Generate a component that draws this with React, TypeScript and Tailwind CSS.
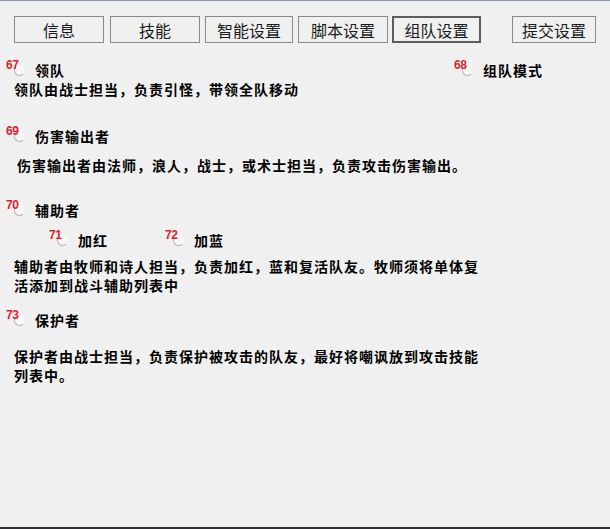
import React from "react"

const cjk = { fontFamily: '"Noto Sans CJK SC", "Noto Sans", sans-serif' }

const tabs = [
  { label: "信息", w: "w-[90px]", gap: "" },
  { label: "技能", w: "w-[90px]", gap: "ml-[6px]" },
  { label: "智能设置", w: "w-[88px]", gap: "ml-[5px]" },
  { label: "脚本设置", w: "w-[90px]", gap: "ml-[5px]" },
  { label: "组队设置", w: "w-[89px]", gap: "ml-[4px]", active: true },
  { label: "提交设置", w: "w-[84px]", gap: "ml-[31px]" },
]

/** Radio with the red control number painted over it */
function Radio({ num, label }: { num: string; label: string }) {
  return (
    <div className="flex items-center h-4">
      <span className="relative w-[11px] h-[11px] shrink-0">
        <span className="absolute inset-0 rounded-full border border-[#b8b8b8] border-t-transparent border-r-transparent bg-white/40" />
        <span
          className="absolute -top-[6px] -left-[8px] text-[12px] leading-none font-bold text-[#dc1e32] tracking-[-0.5px]"
          style={{ fontFamily: '"Liberation Sans", Arial, sans-serif' }}
        >
          {num}
        </span>
      </span>
      <span className="ml-[10px] text-[14px] font-bold text-black tracking-[1px] leading-4" style={cjk}>
        {label}
      </span>
    </div>
  )
}

function Desc({ lines, className = "" }: { lines: string[]; className?: string }) {
  return (
    <div className={"text-[14px] font-bold text-black tracking-[1px] " + className} style={cjk}>
      {lines.map((l) => (
        <div key={l}>{l}</div>
      ))}
    </div>
  )
}

export default function App() {
  return (
    <div className="w-[610px] h-[529px] bg-[#f0f0f0] border-t border-[#8e99a6] border-b-2 border-b-[#2b3036] overflow-hidden">
      {/* Tab buttons */}
      <div className="flex pl-[14px] pt-[15px]">
        {tabs.map((t) => (
          <button
            key={t.label}
            className={
              "h-[27px] flex items-center justify-center bg-[#f0f0f0] text-[16px] text-[#1a1a1a] leading-none " +
              t.w +
              " " +
              t.gap +
              (t.active ? " border-2 border-[#5c5c5c]" : " border border-[#8a8a8a]")
            }
            style={cjk}
          >
            {t.label}
          </button>
        ))}
      </div>

      <div className="flex flex-col">
        {/* 领队 / 组队模式 */}
        <div className="flex mt-[19px] pl-[14px]">
          <Radio num="67" label="领队" />
          <div className="ml-[397px]">
            <Radio num="68" label="组队模式" />
          </div>
        </div>
        <Desc className="mt-[3px] pl-[14px] leading-4" lines={["领队由战士担当，负责引怪，带领全队移动"]} />

        {/* 伤害输出者 */}
        <div className="mt-[31px] pl-[14px]">
          <Radio num="69" label="伤害输出者" />
        </div>
        <Desc className="mt-[13px] pl-[17px] leading-4" lines={["伤害输出者由法师，浪人，战士，或术士担当，负责攻击伤害输出。"]} />

        {/* 辅助者 */}
        <div className="mt-[29px] pl-[14px]">
          <Radio num="70" label="辅助者" />
        </div>
        <div className="flex mt-[14px] pl-[57px]">
          <Radio num="71" label="加红" />
          <div className="ml-[65px]">
            <Radio num="72" label="加蓝" />
          </div>
        </div>
        <Desc
          className="mt-[9px] pl-[14px] leading-[19px]"
          lines={["辅助者由牧师和诗人担当，负责加红，蓝和复活队友。牧师须将单体复", "活添加到战斗辅助列表中"]}
        />

        {/* 保护者 */}
        <div className="mt-[17px] pl-[14px]">
          <Radio num="73" label="保护者" />
        </div>
        <Desc
          className="mt-[19px] pl-[14px] leading-[19px]"
          lines={["保护者由战士担当，负责保护被攻击的队友，最好将嘲讽放到攻击技能", "列表中。"]}
        />
      </div>
    </div>
  )
}
